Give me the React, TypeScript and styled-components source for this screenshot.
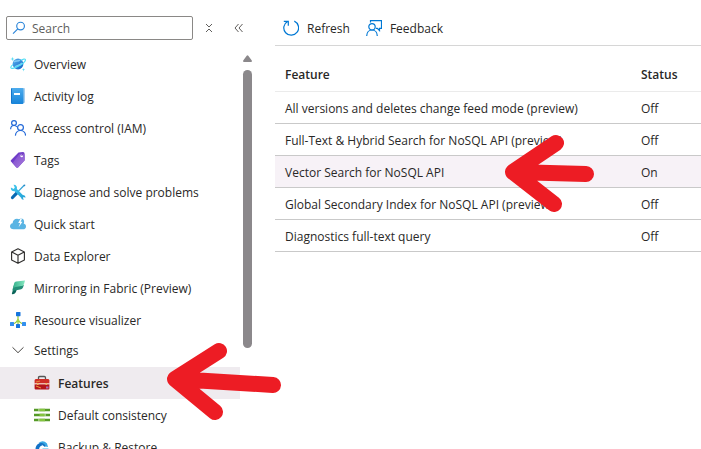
import React from "react";
import styled, { createGlobalStyle } from "styled-components";

const GlobalStyle = createGlobalStyle`
  *, *::before, *::after { box-sizing: border-box; }
  html, body { margin: 0; background: #fff; }
  body, button, input, table {
    font-family: "Segoe UI", "Open Sans", "Noto Sans", sans-serif;
    font-size: 12px;
    line-height: 20px;
    color: #292827;
  }
`;

const Page = styled.div`
  position: relative;
  display: flex;
  height: 100vh;
  overflow: hidden;
`;

const Sidebar = styled.aside`
  flex: none;
  width: 275px;
  display: flex;
  flex-direction: column;
  min-height: 0;
`;

const SearchRow = styled.div`
  flex: none;
  display: flex;
  align-items: center;
  height: 48px;
  padding: 8px 0 0 6px;
`;

const SearchBox = styled.label`
  display: flex;
  align-items: center;
  gap: 6px;
  width: 187px;
  height: 24px;
  margin-right: 1px;
  padding: 0 5px;
  border: 1px solid #8a8886;
  border-radius: 2px;
`;

const SearchInput = styled.input`
  flex: 1;
  min-width: 0;
  padding: 2px 0 0;
  border: 0;
  outline: 0;
  background: transparent;
  &::placeholder { color: #605e5c; opacity: 1; }
`;

const IconButton = styled.button`
  display: flex;
  align-items: center;
  justify-content: center;
  width: 30px;
  height: 24px;
  padding: 0;
  border: 0;
  background: transparent;
  cursor: pointer;
`;

const SidebarBody = styled.div`
  flex: 1;
  display: flex;
  gap: 3px;
  min-height: 0;
`;

const Menu = styled.nav`
  width: 240px;
  overflow: hidden;
`;

const MenuList = styled.ul`
  list-style: none;
  margin: 0;
  padding: 0;
`;

const Label = styled.span`
  padding-top: 2px;
`;

const MenuLink = styled.a<{ $nested?: boolean; $selected?: boolean }>`
  display: flex;
  align-items: center;
  gap: 8px;
  height: 32px;
  padding-left: ${(p) => (p.$nested ? 34 : 10)}px;
  color: inherit;
  text-decoration: none;
  white-space: nowrap;
  font-weight: ${(p) => (p.$selected ? 600 : 400)};
  background: ${(p) => (p.$selected ? "#efebef" : "transparent")};
`;

const GroupButton = styled.button`
  display: flex;
  align-items: center;
  gap: 8px;
  width: 100%;
  height: 28px;
  margin-bottom: 3px;
  padding: 0 0 0 10px;
  border: 0;
  background: transparent;
  cursor: pointer;
`;

const ScrollTrack = styled.div`
  display: flex;
  flex-direction: column;
  gap: 8px;
  width: 9px;
  padding-top: 7px;
`;

const ScrollThumb = styled.div`
  height: calc(70% + 2px);
  border-radius: 5px;
  background: #8b888b;
`;

const Main = styled.main`
  flex: 1;
  min-width: 0;
`;

const Toolbar = styled.div`
  display: flex;
  gap: 16px;
  height: 46px;
  padding: 10px 8px 0;
  border-bottom: 1px solid #d6d6d6;
`;

const ToolButton = styled.button`
  display: flex;
  align-items: center;
  gap: 8px;
  height: 36px;
  padding: 0;
  border: 0;
  background: transparent;
  cursor: pointer;
  align-self: center;
`;

const FeatureTable = styled.table`
  width: 100%;
  border-collapse: separate;
  border-spacing: 0;
  table-layout: fixed;
  text-align: left;
`;

const HeadCell = styled.th<{ $wide?: boolean }>`
  width: ${(p) => (p.$wide ? "356px" : "auto")};
  height: 46px;
  padding: 12px 10px 0;
  border-bottom: 1px solid #ebebeb;
  font-weight: 600;
`;

const Row = styled.tr<{ $active?: boolean }>`
  background: ${(p) => (p.$active ? "#f7f2f7" : "transparent")};
`;

const Cell = styled.td`
  height: 32px;
  padding: 2px 10px 0;
  border-bottom: 1px solid #c9c9c9;
  white-space: nowrap;
`;

const Annotations = styled.svg`
  position: absolute;
  top: 0;
  left: 0;
  pointer-events: none;
`;

const Icon = ({ size = 16, children }: { size?: number; children: React.ReactNode }) => (
  <svg width={size} height={size} viewBox="0 0 16 16" fill="none" aria-hidden="true">
    {children}
  </svg>
);

const OverviewIcon = () => (
  <Icon>
    <defs>
      <linearGradient id="planet" x1="0" y1="0" x2="1" y2="1">
        <stop offset="0" stopColor="#58b2ee" />
        <stop offset="1" stopColor="#1261c4" />
      </linearGradient>
    </defs>
    <circle cx="8" cy="8" r="5.400" fill="url(#planet)" />
    <path d="M4 6c2-2 4 0 6-2M5 11c2-2 5-1 7-4" stroke="#83c9f5" strokeWidth="1.400" />
    <path d="M11 4.200c2.300-1.300 4-1.500 4.300-.8.6 1.400-2.300 4.200-6.200 6.400S1.500 13 .9 11.800c-.3-.7.5-2 2-3.200" stroke="#50dff5" strokeWidth="1.200" />
    <path d="M2.500.8 3 2.500l1.700.5L3 3.500l-.5 1.700L2 3.500.3 3 2 2.500zM13.500 12l.4 1.300 1.300.4-1.300.4-.4 1.300-.4-1.300-1.300-.4 1.300-.4z" fill="#54dcf3" />
  </Icon>
);

const LogIcon = () => (
  <Icon>
    <defs>
      <linearGradient id="book" x1="0" y1="0" x2="0" y2="1">
        <stop stopColor="#4daced" />
        <stop offset="1" stopColor="#1684d9" />
      </linearGradient>
    </defs>
    <rect x="3" y="0" width="12" height="15" rx="1" fill="#a9cfee" />
    <rect x="1" y="0" width="12.500" height="16" rx="1" fill="url(#book)" />
    <path d="M1 1v14h1V0z" fill="#1676cb" />
    <rect x="4" y="5" width="6" height="2" fill="#fff" />
  </Icon>
);

const PeopleIcon = () => (
  <Icon>
    <g stroke="#2268d8" strokeWidth="1.200">
      <circle cx="4" cy="3" r="2.400" />
      <circle cx="10.500" cy="7.500" r="2.900" />
      <path d="M.6 9.200C.7 7 2.200 5.500 4 5.500c1.200 0 2.300.6 3 1.500M5.400 15.600c.2-3 2.400-5.100 5.100-5.100s4.900 2.100 5.100 5.100" />
    </g>
  </Icon>
);

const TagIcon = () => (
  <Icon>
    <defs>
      <linearGradient id="tag" x1="0" y1="0" x2="1" y2="1">
        <stop stopColor="#7a45cd" />
        <stop offset="1" stopColor="#a87ddb" />
      </linearGradient>
    </defs>
    <path d="M8.500.5 13 .1q1.600 0 1.600 1.600l.1 6.500-6.600 7.200q-.9.8-1.800 0L1 9.600q-.7-.8.1-1.700z" fill="#6f3cc8" />
    <path d="M9.600 1.800h3.600q1.300 0 1.300 1.300v5.400l-6.300 6.700q-1 .8-1.900-.1l-3.700-4z" fill="url(#tag)" />
    <circle cx="11.700" cy="4" r="1.300" fill="#fff" />
    <path d="m11.600 4 2-2.800" stroke="#7440bd" />
  </Icon>
);

const ToolsIcon = () => (
  <Icon>
    <defs>
      <linearGradient id="wrench" x1="0" y1="0" x2="1" y2="1">
        <stop stopColor="#42c9ee" />
        <stop offset="1" stopColor="#209fd5" />
      </linearGradient>
    </defs>
    <path d="M14.200 1.200 8 7.600" stroke="#36a4d8" strokeWidth="1.300" />
    <path d="m13.300.9 1.600-.5.5.5-.6 1.500z" fill="#2384c4" />
    <path d="M7.400 8.400 2.500 13.500" stroke="#0869b3" strokeWidth="3.200" strokeLinecap="round" />
    <path d="M3.500.8 4.800 3.600 3.700 4.900.9 3.500C.4 5.700 2 7.500 4.700 7.300l6.600 6.600c.1 1.300 1.400 2 2.700 1.500l-1.200-1.500.9-1 1.700.9c.3-1.800-.9-2.900-2.600-2.900L6.900 5C7.400 2.500 6 .6 3.500.8z" fill="url(#wrench)" />
  </Icon>
);

const QuickIcon = () => (
  <Icon>
    <path d="M3.500 13.300C1.400 13.300 0 12 0 10.200c0-1.600 1.100-2.800 2.600-3C2.800 4.600 4.500 2.800 7 2.800c.7 0 1.400.2 2 .5.7-.5 1.400-.8 2.200-.8 1.700 0 2.800 1.200 2.900 2.900.1 1-.2 1.800-.5 2.200 1.500.4 2.400 1.400 2.400 2.800 0 1.600-1.200 2.900-2.900 2.900z" fill="#59b4e3" />
    <path d="m10.600 2.600-2.400 4.500h1.900l-1.500 4.200 3.900-5.500h-1.900l1.500-3z" fill="#fff" />
  </Icon>
);

const CubeIcon = () => (
  <Icon>
    <path d="m8 .8 6.400 3.100v8L8 15.300 1.600 11.900v-8zM1.800 4 8 7.200 14.200 4M8 7.200v8" stroke="#323130" strokeWidth="1.150" strokeLinejoin="round" />
  </Icon>
);

const FabricIcon = () => (
  <Icon>
    <defs>
      <linearGradient id="fabric" x1="0" y1="0" x2="1" y2="0">
        <stop stopColor="#36b08c" />
        <stop offset="1" stopColor="#86e8c0" />
      </linearGradient>
    </defs>
    <path d="M3.300 9 2 13q-.6 1.500 1 1.200 2.200-.3 2.800-2L7 9z" fill="#0a6459" />
    <path d="m3.700 5.500-1.200 4q-.4 1.300.9 1.200l6.800-1.100c1.400-.3 2.500-1.300 3-2.600l.6-2z" fill="#238e77" />
    <path d="M6.300 1.500 15 .6 14.100 3.700c-.4 1.400-1.500 2.200-3 2.400L5.700 6.900q-1.900.3-2.700 1.700l1.100-5q.4-1.900 2.200-2.100z" fill="url(#fabric)" />
  </Icon>
);

const VisualizerIcon = () => (
  <Icon>
    <path d="M8 3v10M8 6.500q0 3.500-5 5.500M8 6.500q0 3.500 5 5.500" stroke="#91c735" strokeWidth="1.200" />
    <rect x="6" y="0" width="4.500" height="4.200" rx=".6" fill="#1675de" />
    <rect x="0" y="10" width="4" height="4" rx=".5" fill="#338fee" />
    <rect x="6" y="12" width="4" height="4" rx=".5" fill="#1675de" />
    <rect x="12" y="10" width="4" height="4" rx=".5" fill="#338fee" />
    <circle cx="8" cy="8.500" r="1.300" fill="#a8d94a" />
  </Icon>
);

const ChevronIcon = () => (
  <Icon>
    <path d="m2.500 5.300 5.500 5.400 5.500-5.400" stroke="#484644" />
  </Icon>
);

const ToolboxIcon = () => (
  <Icon>
    <path d="M4.500 4V2.700Q4.500 1.500 5.700 1.500h4.600q1.200 0 1.200 1.200V4" stroke="#555" strokeWidth="1.300" />
    <path d="M1.900 4h12.200q1.300.2 1.300 1.600v2.900H.6V5.600Q.6 4.200 1.900 4z" fill="#cf2d26" />
    <path d="M.6 9.200h14.800v4.300q0 1-1 1H1.600q-1 0-1-1z" fill="#b5151a" />
    <path d="m2 11 5 2" stroke="#e8a03c" />
    <path d="m2 7 4-1" stroke="#e8883c" />
    <path d="M.6 8.700h14.800" stroke="#f2c3b8" />
    <path d="M3 8h1.600v2H3zM11.500 8h1.600v2h-1.600z" fill="#f0b45f" />
    <path d="M12 11.500h2.500v2H12z" fill="#b06bb8" />
  </Icon>
);

const SlidersIcon = () => (
  <Icon>
    <path d="M0 3h16M0 8h16M0 13h16" stroke="#559a26" strokeWidth="2.400" />
    <path d="M5 1.800v2.400M11 6.800v2.400M5 11.800v2.400" stroke="#e6f3d8" />
    <path d="M5.500 3H11M5.500 8h5M5.500 13H11" stroke="#85c440" strokeWidth="2.400" />
  </Icon>
);

const BackupIcon = () => (
  <Icon>
    <path d="M1.500 10.500C1.500 6.500 4 4 7.500 4l1 2.500q-3 0-3.500 4z" fill="#1372c8" />
    <path d="M4.500 4Q9 .5 13 4.500L14 8 9.500 7 8 5.500z" fill="#39a8e4" />
    <path d="M5 5.500q4-2 6 2" stroke="#176fc1" strokeWidth="1.500" />
    <path d="M8.500 9.500h6V14h-6z" fill="#42b8eb" />
  </Icon>
);

const SearchIcon = () => (
  <Icon size={14}>
    <circle cx="9.800" cy="5.800" r="4.400" stroke="#2783d8" strokeWidth="1.300" />
    <path d="m6.600 9-5.400 5.500" stroke="#2783d8" strokeWidth="1.300" />
  </Icon>
);

const CollapseGroupsIcon = () => (
  <Icon>
    <path d="m5 4 3 3 3-3M5 12l3-3 3 3" stroke="#605e5c" />
  </Icon>
);

const CollapseMenuIcon = () => (
  <Icon>
    <path d="M7.500 4 4 8l3.500 4M11.500 4 8 8l3.500 4" stroke="#605e5c" />
  </Icon>
);

const RefreshIcon = () => (
  <Icon>
    <path d="M11.300 1.100A7.400 7.400 0 1 1 4.500 1.400M.8 1.300h4.500v4.400" stroke="#0078d4" strokeWidth="1.200" />
  </Icon>
);

const FeedbackIcon = () => (
  <Icon>
    <path d="M4.500 2.500V.7h11v7.600h-2v2.200l-2.200-2.200H10" stroke="#0078d4" strokeWidth="1.200" />
    <circle cx="6" cy="6.800" r="3.200" stroke="#0078d4" strokeWidth="1.200" />
    <path d="M.7 15.900C.8 12.500 3 10 6 10s5.200 2.500 5.300 5.900" stroke="#0078d4" strokeWidth="1.200" />
  </Icon>
);

const menuItems = [
  { label: "Overview", Glyph: OverviewIcon },
  { label: "Activity log", Glyph: LogIcon },
  { label: "Access control (IAM)", Glyph: PeopleIcon },
  { label: "Tags", Glyph: TagIcon },
  { label: "Diagnose and solve problems", Glyph: ToolsIcon },
  { label: "Quick start", Glyph: QuickIcon },
  { label: "Data Explorer", Glyph: CubeIcon },
  { label: "Mirroring in Fabric (Preview)", Glyph: FabricIcon },
  { label: "Resource visualizer", Glyph: VisualizerIcon },
];

const settingsItems = [
  { label: "Features", Glyph: ToolboxIcon, selected: true },
  { label: "Default consistency", Glyph: SlidersIcon, selected: false },
  { label: "Backup & Restore", Glyph: BackupIcon, selected: false },
];

const features = [
  { name: "All versions and deletes change feed mode (preview)", on: false },
  { name: "Full-Text & Hybrid Search for NoSQL API (preview)", on: false },
  { name: "Vector Search for NoSQL API", on: true },
  { name: "Global Secondary Index for NoSQL API (preview)", on: false },
  { name: "Diagnostics full-text query", on: false },
];

export default function App() {
  return (
    <>
      <GlobalStyle />
      <Page>
        <Sidebar>
          <SearchRow>
            <SearchBox>
              <SearchIcon />
              <SearchInput type="text" placeholder="Search" aria-label="Search" />
            </SearchBox>
            <IconButton type="button" aria-label="Collapse all groups">
              <CollapseGroupsIcon />
            </IconButton>
            <IconButton type="button" aria-label="Collapse menu">
              <CollapseMenuIcon />
            </IconButton>
          </SearchRow>
          <SidebarBody>
            <Menu aria-label="Resource menu">
              <MenuList>
                {menuItems.map(({ label, Glyph }) => (
                  <li key={label}>
                    <MenuLink href="#">
                      <Glyph />
                      <Label>{label}</Label>
                    </MenuLink>
                  </li>
                ))}
                <li>
                  <GroupButton type="button" aria-expanded="true">
                    <ChevronIcon />
                    <Label>Settings</Label>
                  </GroupButton>
                  <MenuList>
                    {settingsItems.map(({ label, Glyph, selected }) => (
                      <li key={label}>
                        <MenuLink href="#" $nested $selected={selected}>
                          <Glyph />
                          <Label>{label}</Label>
                        </MenuLink>
                      </li>
                    ))}
                  </MenuList>
                </li>
              </MenuList>
            </Menu>
            <ScrollTrack aria-hidden="true">
              <svg width="9" height="7" viewBox="0 0 9 7">
                <path d="M3.700.7q.8-1.100 1.600 0L8.800 5.500Q9.300 7 8 7H1Q-.3 7 .2 5.500z" fill="#8b888b" />
              </svg>
              <ScrollThumb />
            </ScrollTrack>
          </SidebarBody>
        </Sidebar>
        <Main>
          <Toolbar>
            <ToolButton type="button">
              <RefreshIcon />
              <Label>Refresh</Label>
            </ToolButton>
            <ToolButton type="button">
              <FeedbackIcon />
              <Label>Feedback</Label>
            </ToolButton>
          </Toolbar>
          <FeatureTable>
            <thead>
              <tr>
                <HeadCell scope="col" $wide>Feature</HeadCell>
                <HeadCell scope="col">Status</HeadCell>
              </tr>
            </thead>
            <tbody>
              {features.map(({ name, on }) => (
                <Row key={name} $active={on}>
                  <Cell>{name}</Cell>
                  <Cell>{on ? "On" : "Off"}</Cell>
                </Row>
              ))}
            </tbody>
          </FeatureTable>
        </Main>
        <Annotations width="701" height="449" viewBox="0 0 701 449" fill="none" aria-hidden="true">
          <g stroke="#ed1c24" strokeWidth="16" strokeLinecap="round" strokeLinejoin="round">
            <path d="M219 351 175 379 215 412M175 379l98 6" />
            <path d="M556 143 513 172 554 204M513 172l73 2" />
          </g>
        </Annotations>
      </Page>
    </>
  );
}
